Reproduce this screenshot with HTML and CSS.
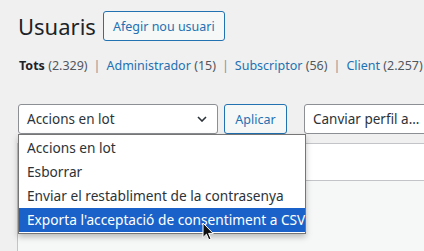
FILE: index.html
```html
<!DOCTYPE html>
<html lang="ca">
<head>
<meta charset="utf-8">
<link rel="stylesheet" href="styles.css">
</head>
<body>
<div class="wrap">
  <div class="head">
    <h1 class="title">Usuaris</h1>
    <a class="btn-add">Afegir nou usuari</a>
  </div>
  <ul class="subsub">
    <li><b class="current">Tots</b> <span class="count">(2.329)</span><span class="sep">|</span></li>
    <li><a class="link">Administrador</a> <span class="count">(15)</span><span class="sep">|</span></li>
    <li><a class="link">Subscriptor</a> <span class="count">(56)</span><span class="sep">|</span></li>
    <li><a class="link">Client</a> <span class="count">(2.257)</span></li>
  </ul>
  <div class="tablenav">
    <div class="bulk">
      <div class="select sel-bulk">
        <span>Accions en lot</span>
        <svg class="chev" width="10" height="6" viewBox="0 0 10 6"><path d="M1 1l4 4 4-4" fill="none" stroke="#2c3338" stroke-width="1.6"/></svg>
      </div>
      <ul class="dropdown">
        <li class="opt">Accions en lot</li>
        <li class="opt">Esborrar</li>
        <li class="opt">Enviar el restabliment de la contrasenya</li>
        <li class="opt active">Exporta l'acceptació de consentiment a CSV</li>
      </ul>
    </div>
    <button class="btn-apply">Aplicar</button>
    <div class="select sel-role"><span>Canviar perfil a...</span></div>
  </div>
  <div class="table">
    <div class="thead"></div>
    <div class="trow"></div>
  </div>
</div>
<svg class="cursor" width="12" height="19" viewBox="0 0 12 19"><path d="M1 1v14.5l3.4-3.3 2.4 5.6 2.2-1-2.4-5.4h4.6z" fill="#111" stroke="#fff" stroke-width="1"/></svg>
</body>
</html>
```
FILE: styles.css
```css
html, body {
  margin: 0;
  padding: 0;
}
body {
  background: #f0f0f1;
  font-family: "Noto Sans", "Open Sans", sans-serif;
  color: #1d2327;
  width: 424px;
  height: 251px;
  overflow: hidden;
  position: relative;
}
.wrap {
  padding: 11px 0 0 18px;
}
.head {
  display: flex;
  align-items: center;
  gap: 7px;
  height: 30px;
}
.title {
  margin: 0;
  font-size: 22px;
  font-weight: 400;
  line-height: 30px;
  color: #1d2327;
}
.btn-add {
  box-sizing: border-box;
  display: flex;
  align-items: center;
  justify-content: center;
  width: 122px;
  height: 30px;
  border: 1px solid #2271b1;
  border-radius: 3px;
  background: #f6f7f7;
  color: #2271b1;
  font-size: 12.5px;
}
.subsub {
  list-style: none;
  margin: 15px 0 0 1px;
  padding: 0;
  display: flex;
  font-size: 12.5px;
  line-height: 20px;
  white-space: nowrap;
}
.current {
  font-weight: 700;
  color: #1d2327;
}
.link {
  color: #2271b1;
}
.count {
  color: #50575e;
}
.sep {
  color: #8c8f94;
  margin: 0 6px;
}
.tablenav {
  margin-top: 28px;
  display: flex;
  height: 30px;
  white-space: nowrap;
}
.bulk {
  position: relative;
  flex-shrink: 0;
}
.select {
  box-sizing: border-box;
  height: 30px;
  border: 1px solid #8c8f94;
  border-radius: 3px;
  background: #fff;
  display: flex;
  align-items: center;
  padding: 0 8px;
  font-size: 13.5px;
  color: #2c3338;
  flex-shrink: 0;
}
.sel-bulk {
  width: 200px;
  justify-content: space-between;
}
.chev {
  margin-right: 2px;
}
.btn-apply {
  box-sizing: border-box;
  flex-shrink: 0;
  margin-left: 6px;
  height: 30px;
  width: 63px;
  padding: 0;
  border: 1px solid #2271b1;
  border-radius: 3px;
  background: #f6f7f7;
  color: #2271b1;
  font-family: inherit;
  font-size: 12.5px;
}
.sel-role {
  margin-left: 17px;
  width: 140px;
}
.dropdown {
  position: absolute;
  left: 0;
  top: 30px;
  z-index: 5;
  margin: 0;
  padding: 1px 0 1px;
  list-style: none;
  width: 288px;
  box-sizing: border-box;
  background: #fff;
  border: 1px solid #767676;
  box-shadow: 0 3px 6px rgba(0, 0, 0, 0.25);
  font-size: 13.7px;
  color: #2c3338;
  white-space: nowrap;
}
.opt {
  height: 24px;
  line-height: 23px;
  padding-left: 8px;
}
.opt.active {
  background: #1a62c9;
  color: #fff;
}
.table {
  margin-top: 9px;
  margin-left: -1px;
  border: 1px solid #c3c4c7;
  border-right: 0;
  background: #fff;
}
.thead {
  height: 36px;
  border-bottom: 1px solid #c3c4c7;
}
.trow {
  height: 80px;
  background: #f6f7f7;
}
.cursor {
  position: absolute;
  left: 202px;
  top: 222px;
  z-index: 10;
}
```
